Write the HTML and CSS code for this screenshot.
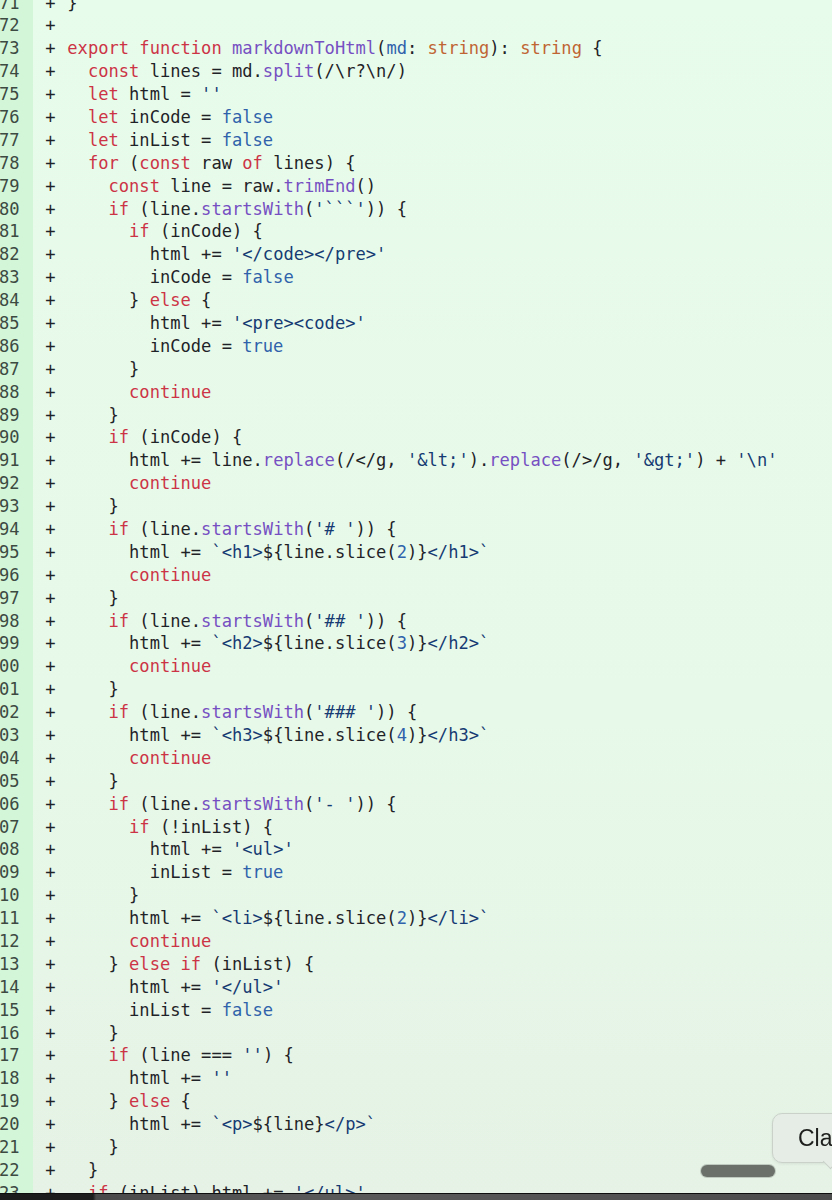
FILE: index.html
```html
<!DOCTYPE html>
<html lang="en">
<head>
<meta charset="utf-8">
<title>markdownToHtml diff</title>
<link rel="stylesheet" href="styles.css">
</head>
<body>
<div class="diff">
<div class="row"><span class="ln"><span>71</span></span><span class="sg">+</span><span class="cd">}</span></div>
<div class="row"><span class="ln"><span>72</span></span><span class="sg">+</span><span class="cd"></span></div>
<div class="row"><span class="ln"><span>73</span></span><span class="sg">+</span><span class="cd"><span class="k">export</span> <span class="k">function</span> <span class="f">markdownToHtml</span>(<span class="b">md</span>: <span class="t">string</span>): <span class="t">string</span> {</span></div>
<div class="row"><span class="ln"><span>74</span></span><span class="sg">+</span><span class="cd">  <span class="k">const</span> lines = md.<span class="f">split</span>(/\r?\n/)</span></div>
<div class="row"><span class="ln"><span>75</span></span><span class="sg">+</span><span class="cd">  <span class="k">let</span> html = <span class="s">''</span></span></div>
<div class="row"><span class="ln"><span>76</span></span><span class="sg">+</span><span class="cd">  <span class="k">let</span> inCode = <span class="b">false</span></span></div>
<div class="row"><span class="ln"><span>77</span></span><span class="sg">+</span><span class="cd">  <span class="k">let</span> inList = <span class="b">false</span></span></div>
<div class="row"><span class="ln"><span>78</span></span><span class="sg">+</span><span class="cd">  <span class="k">for</span> (<span class="k">const</span> raw <span class="k">of</span> lines) {</span></div>
<div class="row"><span class="ln"><span>79</span></span><span class="sg">+</span><span class="cd">    <span class="k">const</span> line = raw.<span class="f">trimEnd</span>()</span></div>
<div class="row"><span class="ln"><span>80</span></span><span class="sg">+</span><span class="cd">    <span class="k">if</span> (line.<span class="f">startsWith</span>(<span class="s">'```'</span>)) {</span></div>
<div class="row"><span class="ln"><span>81</span></span><span class="sg">+</span><span class="cd">      <span class="k">if</span> (inCode) {</span></div>
<div class="row"><span class="ln"><span>82</span></span><span class="sg">+</span><span class="cd">        html += <span class="s">'&lt;/code&gt;&lt;/pre&gt;'</span></span></div>
<div class="row"><span class="ln"><span>83</span></span><span class="sg">+</span><span class="cd">        inCode = <span class="b">false</span></span></div>
<div class="row"><span class="ln"><span>84</span></span><span class="sg">+</span><span class="cd">      } <span class="k">else</span> {</span></div>
<div class="row"><span class="ln"><span>85</span></span><span class="sg">+</span><span class="cd">        html += <span class="s">'&lt;pre&gt;&lt;code&gt;'</span></span></div>
<div class="row"><span class="ln"><span>86</span></span><span class="sg">+</span><span class="cd">        inCode = <span class="b">true</span></span></div>
<div class="row"><span class="ln"><span>87</span></span><span class="sg">+</span><span class="cd">      }</span></div>
<div class="row"><span class="ln"><span>88</span></span><span class="sg">+</span><span class="cd">      <span class="k">continue</span></span></div>
<div class="row"><span class="ln"><span>89</span></span><span class="sg">+</span><span class="cd">    }</span></div>
<div class="row"><span class="ln"><span>90</span></span><span class="sg">+</span><span class="cd">    <span class="k">if</span> (inCode) {</span></div>
<div class="row"><span class="ln"><span>91</span></span><span class="sg">+</span><span class="cd">      html += line.<span class="f">replace</span>(/&lt;/g, <span class="s">'&amp;lt;'</span>).<span class="f">replace</span>(/&gt;/g, <span class="s">'&amp;gt;'</span>) + <span class="s">'\n'</span></span></div>
<div class="row"><span class="ln"><span>92</span></span><span class="sg">+</span><span class="cd">      <span class="k">continue</span></span></div>
<div class="row"><span class="ln"><span>93</span></span><span class="sg">+</span><span class="cd">    }</span></div>
<div class="row"><span class="ln"><span>94</span></span><span class="sg">+</span><span class="cd">    <span class="k">if</span> (line.<span class="f">startsWith</span>(<span class="s">'# '</span>)) {</span></div>
<div class="row"><span class="ln"><span>95</span></span><span class="sg">+</span><span class="cd">      html += <span class="s">`&lt;h1&gt;</span>${line.slice(<span class="b">2</span>)}<span class="s">&lt;/h1&gt;`</span></span></div>
<div class="row"><span class="ln"><span>96</span></span><span class="sg">+</span><span class="cd">      <span class="k">continue</span></span></div>
<div class="row"><span class="ln"><span>97</span></span><span class="sg">+</span><span class="cd">    }</span></div>
<div class="row"><span class="ln"><span>98</span></span><span class="sg">+</span><span class="cd">    <span class="k">if</span> (line.<span class="f">startsWith</span>(<span class="s">'## '</span>)) {</span></div>
<div class="row"><span class="ln"><span>99</span></span><span class="sg">+</span><span class="cd">      html += <span class="s">`&lt;h2&gt;</span>${line.slice(<span class="b">3</span>)}<span class="s">&lt;/h2&gt;`</span></span></div>
<div class="row"><span class="ln"><span>100</span></span><span class="sg">+</span><span class="cd">      <span class="k">continue</span></span></div>
<div class="row"><span class="ln"><span>101</span></span><span class="sg">+</span><span class="cd">    }</span></div>
<div class="row"><span class="ln"><span>102</span></span><span class="sg">+</span><span class="cd">    <span class="k">if</span> (line.<span class="f">startsWith</span>(<span class="s">'### '</span>)) {</span></div>
<div class="row"><span class="ln"><span>103</span></span><span class="sg">+</span><span class="cd">      html += <span class="s">`&lt;h3&gt;</span>${line.slice(<span class="b">4</span>)}<span class="s">&lt;/h3&gt;`</span></span></div>
<div class="row"><span class="ln"><span>104</span></span><span class="sg">+</span><span class="cd">      <span class="k">continue</span></span></div>
<div class="row"><span class="ln"><span>105</span></span><span class="sg">+</span><span class="cd">    }</span></div>
<div class="row"><span class="ln"><span>106</span></span><span class="sg">+</span><span class="cd">    <span class="k">if</span> (line.<span class="f">startsWith</span>(<span class="s">'- '</span>)) {</span></div>
<div class="row"><span class="ln"><span>107</span></span><span class="sg">+</span><span class="cd">      <span class="k">if</span> (!inList) {</span></div>
<div class="row"><span class="ln"><span>108</span></span><span class="sg">+</span><span class="cd">        html += <span class="s">'&lt;ul&gt;'</span></span></div>
<div class="row"><span class="ln"><span>109</span></span><span class="sg">+</span><span class="cd">        inList = <span class="b">true</span></span></div>
<div class="row"><span class="ln"><span>110</span></span><span class="sg">+</span><span class="cd">      }</span></div>
<div class="row"><span class="ln"><span>111</span></span><span class="sg">+</span><span class="cd">      html += <span class="s">`&lt;li&gt;</span>${line.slice(<span class="b">2</span>)}<span class="s">&lt;/li&gt;`</span></span></div>
<div class="row"><span class="ln"><span>112</span></span><span class="sg">+</span><span class="cd">      <span class="k">continue</span></span></div>
<div class="row"><span class="ln"><span>113</span></span><span class="sg">+</span><span class="cd">    } <span class="k">else</span> <span class="k">if</span> (inList) {</span></div>
<div class="row"><span class="ln"><span>114</span></span><span class="sg">+</span><span class="cd">      html += <span class="s">'&lt;/ul&gt;'</span></span></div>
<div class="row"><span class="ln"><span>115</span></span><span class="sg">+</span><span class="cd">      inList = <span class="b">false</span></span></div>
<div class="row"><span class="ln"><span>116</span></span><span class="sg">+</span><span class="cd">    }</span></div>
<div class="row"><span class="ln"><span>117</span></span><span class="sg">+</span><span class="cd">    <span class="k">if</span> (line === <span class="s">''</span>) {</span></div>
<div class="row"><span class="ln"><span>118</span></span><span class="sg">+</span><span class="cd">      html += <span class="s">''</span></span></div>
<div class="row"><span class="ln"><span>119</span></span><span class="sg">+</span><span class="cd">    } <span class="k">else</span> {</span></div>
<div class="row"><span class="ln"><span>120</span></span><span class="sg">+</span><span class="cd">      html += <span class="s">`&lt;p&gt;</span>${line}<span class="s">&lt;/p&gt;`</span></span></div>
<div class="row"><span class="ln"><span>121</span></span><span class="sg">+</span><span class="cd">    }</span></div>
<div class="row"><span class="ln"><span>122</span></span><span class="sg">+</span><span class="cd">  }</span></div>
<div class="row"><span class="ln"><span>123</span></span><span class="sg">+</span><span class="cd">  <span class="k">if</span> (inList) html += <span class="s">'&lt;/ul&gt;'</span></span></div>
<div class="row"><span class="ln"><span>124</span></span><span class="sg">+</span><span class="cd">  <span class="k">return</span> html</span></div>
</div>
<div class="tip"><span class="tip-text">Cla</span><span class="tip-tail"></span></div>
<div class="thumb"></div>
<div class="edge"></div>
</body>
</html>
```

FILE: styles.css
```css
html, body {
  margin: 0;
  padding: 0;
}
body {
  background: linear-gradient(180deg, #e8fceb 0%, #e7f9e9 60%, #e5f2e5 100%);
  font-family: "DejaVu Sans Mono", "Liberation Mono", monospace;
  font-size: 17.1px;
  color: #1f2328;
  height: 1200px;
  overflow: hidden;
}
.diff {
  margin-top: -8.5px;
  display: flex;
  flex-direction: column;
}
.row {
  display: grid;
  grid-template-columns: 33px 34.3px 1fr;
  height: 22.9px;
  line-height: 22.9px;
}
.ln {
  background: #d3f6d9;
  color: #3d4a42;
  overflow: hidden;
  display: flex;
  justify-content: flex-end;
  padding-right: 13.5px;
  white-space: nowrap;
}
.ln > span {
  flex: none;
}
.sg {
  padding-left: 12.35px;
  color: #1f2328;
}
.cd {
  white-space: pre;
}
.k { color: #cc3446; }
.t { color: #bf6534; }
.f { color: #7650c2; }
.b { color: #2f62ab; }
.s { color: #163b73; }

.tip {
  position: fixed;
  left: 772px;
  top: 1113px;
  width: 90px;
  height: 50px;
  box-sizing: border-box;
  background: #e6ede6;
  border: 1px solid #c9d1c9;
  border-radius: 10px;
  box-shadow: 0 1px 3px rgba(0, 0, 0, 0.08);
  display: flex;
  align-items: center;
  padding-left: 25px;
  font-family: "Liberation Sans", Arial, sans-serif;
  font-size: 23px;
  color: #1d1f1d;
}
.tip-tail {
  position: absolute;
  left: 52px;
  top: 42px;
  width: 10px;
  height: 10px;
  background: #e6ede6;
  border-right: 1px solid #c9d1c9;
  border-bottom: 1px solid #c9d1c9;
  transform: rotate(45deg);
}
.thumb {
  position: fixed;
  left: 701px;
  top: 1165px;
  width: 74px;
  height: 12px;
  border-radius: 6px;
  background: #6b706b;
  box-shadow: 0 0 0 1px rgba(120, 125, 120, 0.35);
}
.edge {
  position: fixed;
  left: 0;
  right: 0;
  bottom: 0;
  height: 6px;
  background: linear-gradient(90deg, #1c1c1c 0, #1c1c1c 93px, #4a4a4a 96px, #5a5a5a 40%, #4c4c4c 100%);
  border-top: 1px solid #0e0e0e;
}
```
